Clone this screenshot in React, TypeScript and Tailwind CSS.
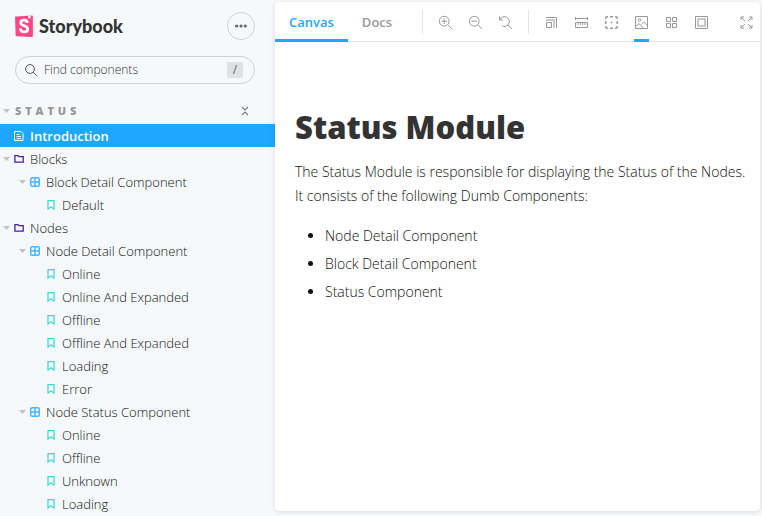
import React from "react";

type Kind = "document" | "group" | "component" | "story";

interface Item {
  name: string;
  kind: Kind;
  depth: 0 | 1 | 2;
  selected?: boolean;
}

const items: Item[] = [
  { name: "Introduction", kind: "document", depth: 0, selected: true },
  { name: "Blocks", kind: "group", depth: 0 },
  { name: "Block Detail Component", kind: "component", depth: 1 },
  { name: "Default", kind: "story", depth: 2 },
  { name: "Nodes", kind: "group", depth: 0 },
  { name: "Node Detail Component", kind: "component", depth: 1 },
  { name: "Online", kind: "story", depth: 2 },
  { name: "Online And Expanded", kind: "story", depth: 2 },
  { name: "Offline", kind: "story", depth: 2 },
  { name: "Offline And Expanded", kind: "story", depth: 2 },
  { name: "Loading", kind: "story", depth: 2 },
  { name: "Error", kind: "story", depth: 2 },
  { name: "Node Status Component", kind: "component", depth: 1 },
  { name: "Online", kind: "story", depth: 2 },
  { name: "Offline", kind: "story", depth: 2 },
  { name: "Unknown", kind: "story", depth: 2 },
  { name: "Loading", kind: "story", depth: 2 },
];

const indents = ["pl-[3px]", "pl-[19px]", "pl-[35px]"];

function Caret() {
  return (
    <svg viewBox="0 0 7 4" className="h-1 w-[7px] fill-[#bfc2c5]" aria-hidden="true">
      <path d="M0 0h7L3.500 4z" />
    </svg>
  );
}

function KindIcon({ kind }: { kind: Kind }) {
  const base = "h-[10px] w-[10px] overflow-visible fill-none";
  switch (kind) {
    case "document":
      return (
        <svg viewBox="0 0 10 10" className={`${base} stroke-white`} aria-hidden="true">
          <path d="M.5.500h6.500l2 2v7H.5z" />
          <path d="M2.500 3.500h3M2.500 5.500h4.500M2.500 7.500h4.500" />
        </svg>
      );
    case "group":
      return (
        <svg viewBox="0 0 10 10" className={`${base} stroke-[#4a1f9c]`} aria-hidden="true">
          <path strokeWidth="1.300" d="M.9 1.600h3l1 1.100h4.300v5.400H.9z" />
        </svg>
      );
    case "component":
      return (
        <svg viewBox="0 0 10 10" className={`${base} stroke-[#4db5ff]`} aria-hidden="true">
          <rect x=".7" y=".7" width="8.600" height="8.600" rx="1.500" strokeWidth="1.500" />
          <path d="M5 1v8M1 5h8" strokeWidth="1.500" />
        </svg>
      );
    case "story":
      return (
        <svg viewBox="0 0 10 10" className={`${base} stroke-[#37d5d3]`} aria-hidden="true">
          <path strokeWidth="1.200" d="M2 .6h6v8.500L5 6.700 2 9.100z" />
        </svg>
      );
  }
}

function TreeRow({ item }: { item: Item }) {
  const expandable = item.kind === "group" || item.kind === "component";
  return (
    <li>
      <a
        href="#"
        className={`flex h-[23px] items-center text-[13px] leading-5 whitespace-nowrap ${indents[item.depth]} ${
          item.selected ? "bg-[#1ea7fd] font-semibold text-white" : "font-light text-[#111111]"
        }`}
      >
        <span className="mr-1 w-[7px]">{expandable && <Caret />}</span>
        <KindIcon kind={item.kind} />
        <span className="ml-[6px]">{item.name}</span>
      </a>
    </li>
  );
}

function Sidebar() {
  return (
    <aside className="flex w-[275px] shrink-0 flex-col overflow-hidden">
      <header className="flex items-center justify-between pt-3 pr-5 pl-[15px]">
        <a href="#" className="flex items-center gap-[6px] text-[#333333]">
          <svg viewBox="0 0 18 22" className="h-[22px] w-[18px]" aria-hidden="true">
            <path
              fill="#ff4785"
              d="M.7 1.600 16.800.4c.6 0 1.100.4 1.100 1v19.500c0 .6-.5 1-1.100 1L1.600 21.200c-.5 0-.9-.4-1-.9L0 2.500c0-.5.300-.9.700-.9z"
            />
            <path fill="#fff" d="m13.200.7 2.400-.2.100 3-.3.100-.9-.7-1 .8-.3-.1z" />
            <path
              fill="none"
              stroke="#fff"
              strokeWidth="2.800"
              d="M12.300 8c0-2.200-1.300-2.900-3.300-2.900S5.800 6.200 5.800 7.700c0 3.700 6.900 2.500 6.900 6.200 0 1.900-1.500 2.900-3.600 2.900-2.400 0-3.800-1.100-3.600-3.500"
            />
          </svg>
          <span className="font-[Lato] text-[18px] leading-7 font-black">Storybook</span>
        </a>
        <button
          type="button"
          aria-label="Shortcuts"
          className="flex h-7 w-7 items-center justify-center rounded-full border border-[#cdd1d5]"
        >
          <svg viewBox="0 0 12 4" className="h-1 w-3 fill-[#666666]" aria-hidden="true">
            <circle cx="1.700" cy="2" r="1.600" />
            <circle cx="6" cy="2" r="1.600" />
            <circle cx="10.300" cy="2" r="1.600" />
          </svg>
        </button>
      </header>

      <label className="mt-4 mr-5 ml-[15px] flex h-7 items-center rounded-full border border-[#cdd1d5] pr-[11px] pl-[9px]">
        <svg viewBox="0 0 12 12" className="h-3 w-3 shrink-0 fill-none stroke-[#555555]" aria-hidden="true">
          <circle cx="5" cy="5" r="4.400" />
          <path d="m8.200 8.200 3.400 3.400" />
        </svg>
        <input
          type="text"
          aria-label="Find components"
          placeholder="Find components"
          className="ml-[7px] w-full min-w-0 bg-transparent text-[12px] leading-4 font-light outline-none placeholder:text-[#333333]"
        />
        <kbd className="flex h-4 w-4 shrink-0 items-center justify-center rounded-[2px] bg-[#dfe2e5] font-[Open_Sans] text-[12px] leading-4 text-[#666666]">
          /
        </kbd>
      </label>

      <div className="mt-[14px] flex h-[26px] items-center pr-[25px] pl-[3px]">
        <button type="button" className="flex items-center gap-[5px]">
          <Caret />
          <span className="text-[11px] leading-4 font-extrabold tracking-[0.35em] text-[#999999] uppercase">Status</span>
        </button>
        <button type="button" aria-label="Collapse all" className="ml-auto">
          <svg viewBox="0 0 10 10" className="h-[10px] w-[10px] fill-none stroke-[#737577]" aria-hidden="true">
            <path strokeWidth="1.200" d="m2 .8 3 3 3-3M2 9.200l3-3 3 3" />
          </svg>
        </button>
      </div>

      <ul>
        {items.map((item, i) => (
          <TreeRow key={i} item={item} />
        ))}
      </ul>
    </aside>
  );
}

function ToolButton({ label, active, children }: { label: string; active?: boolean; children: React.ReactNode }) {
  return (
    <button
      type="button"
      aria-label={label}
      className={`flex h-10 w-[15px] shrink-0 items-center justify-end border-y-[3px] border-t-transparent ${
        active ? "border-b-[#1ea7fd]" : "border-b-transparent"
      }`}
    >
      <svg viewBox="0 -1 14 14" className="h-[14px] w-[14px] fill-none stroke-[#999999]" aria-hidden="true">
        {children}
      </svg>
    </button>
  );
}

function Toolbar() {
  return (
    <div className="flex h-10 shrink-0 items-center shadow-[inset_0_-1px_0_#e3e5e7]">
      <div role="tablist" className="flex text-[13px] leading-5 font-semibold">
        <button
          type="button"
          role="tab"
          aria-selected="true"
          className="h-10 border-y-[3px] border-t-transparent border-b-[#1ea7fd] px-[14px] text-[#1ea7fd]"
        >
          Canvas
        </button>
        <button
          type="button"
          role="tab"
          aria-selected="false"
          className="h-10 border-y-[3px] border-transparent px-[14px] text-[#999999]"
        >
          Docs
        </button>
      </div>
      <div className="ml-4 h-6 w-px bg-[#e3e5e7]" />
      <div className="mx-[15px] flex gap-[15px]">
        <ToolButton label="Zoom in">
          <circle cx="5.200" cy="5.200" r="4.900" />
          <path d="M8.800 8.800l4.400 4.200M2.500 5.200H8M5.200 2.500V8" />
        </ToolButton>
        <ToolButton label="Zoom out">
          <circle cx="5.200" cy="5.200" r="4.900" />
          <path d="M8.800 8.800l4.400 4.200M2.500 5.200H8" />
        </ToolButton>
        <ToolButton label="Reset zoom">
          <path d="M1 3.500a4.900 4.900 0 1 1 1.800 6.200M8.800 8.800l4.400 4.200M.5.500v3.500h3.300" />
        </ToolButton>
      </div>
      <div className="h-6 w-px bg-[#e3e5e7]" />
      <div className="ml-[15px] flex gap-[15px]">
        <ToolButton label="Viewport">
          <path d="M1.500 6.500h5v5h-5zM1 1.500h10.500V12" />
          <path d="M1 4h8v8" strokeWidth="1.500" strokeOpacity=".7" />
        </ToolButton>
        <ToolButton label="Measure">
          <path d="M.5 1v3M12.500 1v3M1 2.500h11M.5 6.500h12v5H.5zM3 7v2M5.300 7v2M7.700 7v2M10 7v2" />
        </ToolButton>
        <ToolButton label="Outline">
          <path
            d="M.8 3V2Q.8.8 2 .8h1M10 .8h1q1.200 0 1.200 1.200v1M12.200 10v1q0 1.200-1.200 1.200h-1M3 12.200H2Q.8 12.200.8 11v-1M5 .8h3M5 12.200h3M.8 5v3M12.200 5v3M5.700 6.500h1.600"
            strokeWidth="1.500"
          />
        </ToolButton>
        <ToolButton label="Background" active>
          <path d="M.5.500h12v12H.5z" />
          <circle cx="4.500" cy="3.900" r="1.300" />
          <path d="M.5 10.500l3.500-3 4.500 4.800M6.300 8.500l2.500-2.700 3.700 4" />
        </ToolButton>
        <ToolButton label="Grid">
          <path d="M1.500 1.500h4v4h-4zM7.500 1.500h4v4h-4zM1.500 7.500h4v4h-4zM7.500 7.500h4v4h-4z" />
        </ToolButton>
        <ToolButton label="Borders">
          <path d="M.5.500h12v12H.5z" />
          <path strokeWidth="1.500" strokeOpacity=".7" d="M3 3h7v7H3z" />
        </ToolButton>
      </div>
      <div className="mr-[6px] ml-auto flex">
        <ToolButton label="Go full screen">
          <path d="M1 4V1h3M9 1h3v3M12 9v3H9M4 12H1V9M1 1l4 4M12 1 8 5M12 12 8 8M1 12l4-4" />
        </ToolButton>
      </div>
    </div>
  );
}

export default function App() {
  return (
    <div className="flex h-screen overflow-hidden bg-[#f6f9fc] font-['Open_Sans','Noto_Sans',sans-serif]">
      <Sidebar />
      <main className="mt-[2px] mr-[2px] mb-[5px] flex min-w-0 flex-1 flex-col overflow-hidden rounded-[4px] bg-white shadow-[0_1px_5px_0_rgba(0,0,0,0.12)]">
        <Toolbar />
        <article className="pt-[65px] pr-2 pl-5 text-[14px] leading-6 font-light text-[#111111]">
          <h1 className="text-[31px] leading-10 font-extrabold text-[#333333]">Status Module</h1>
          <p className="mt-[13px]">
            The Status Module is responsible for displaying the Status of the Nodes.
            <br />
            It consists of the following Dumb Components:
          </p>
          <ul className="mt-4 list-disc space-y-1 pl-[30px]">
            <li>Node Detail Component</li>
            <li>Block Detail Component</li>
            <li>Status Component</li>
          </ul>
        </article>
      </main>
    </div>
  );
}
